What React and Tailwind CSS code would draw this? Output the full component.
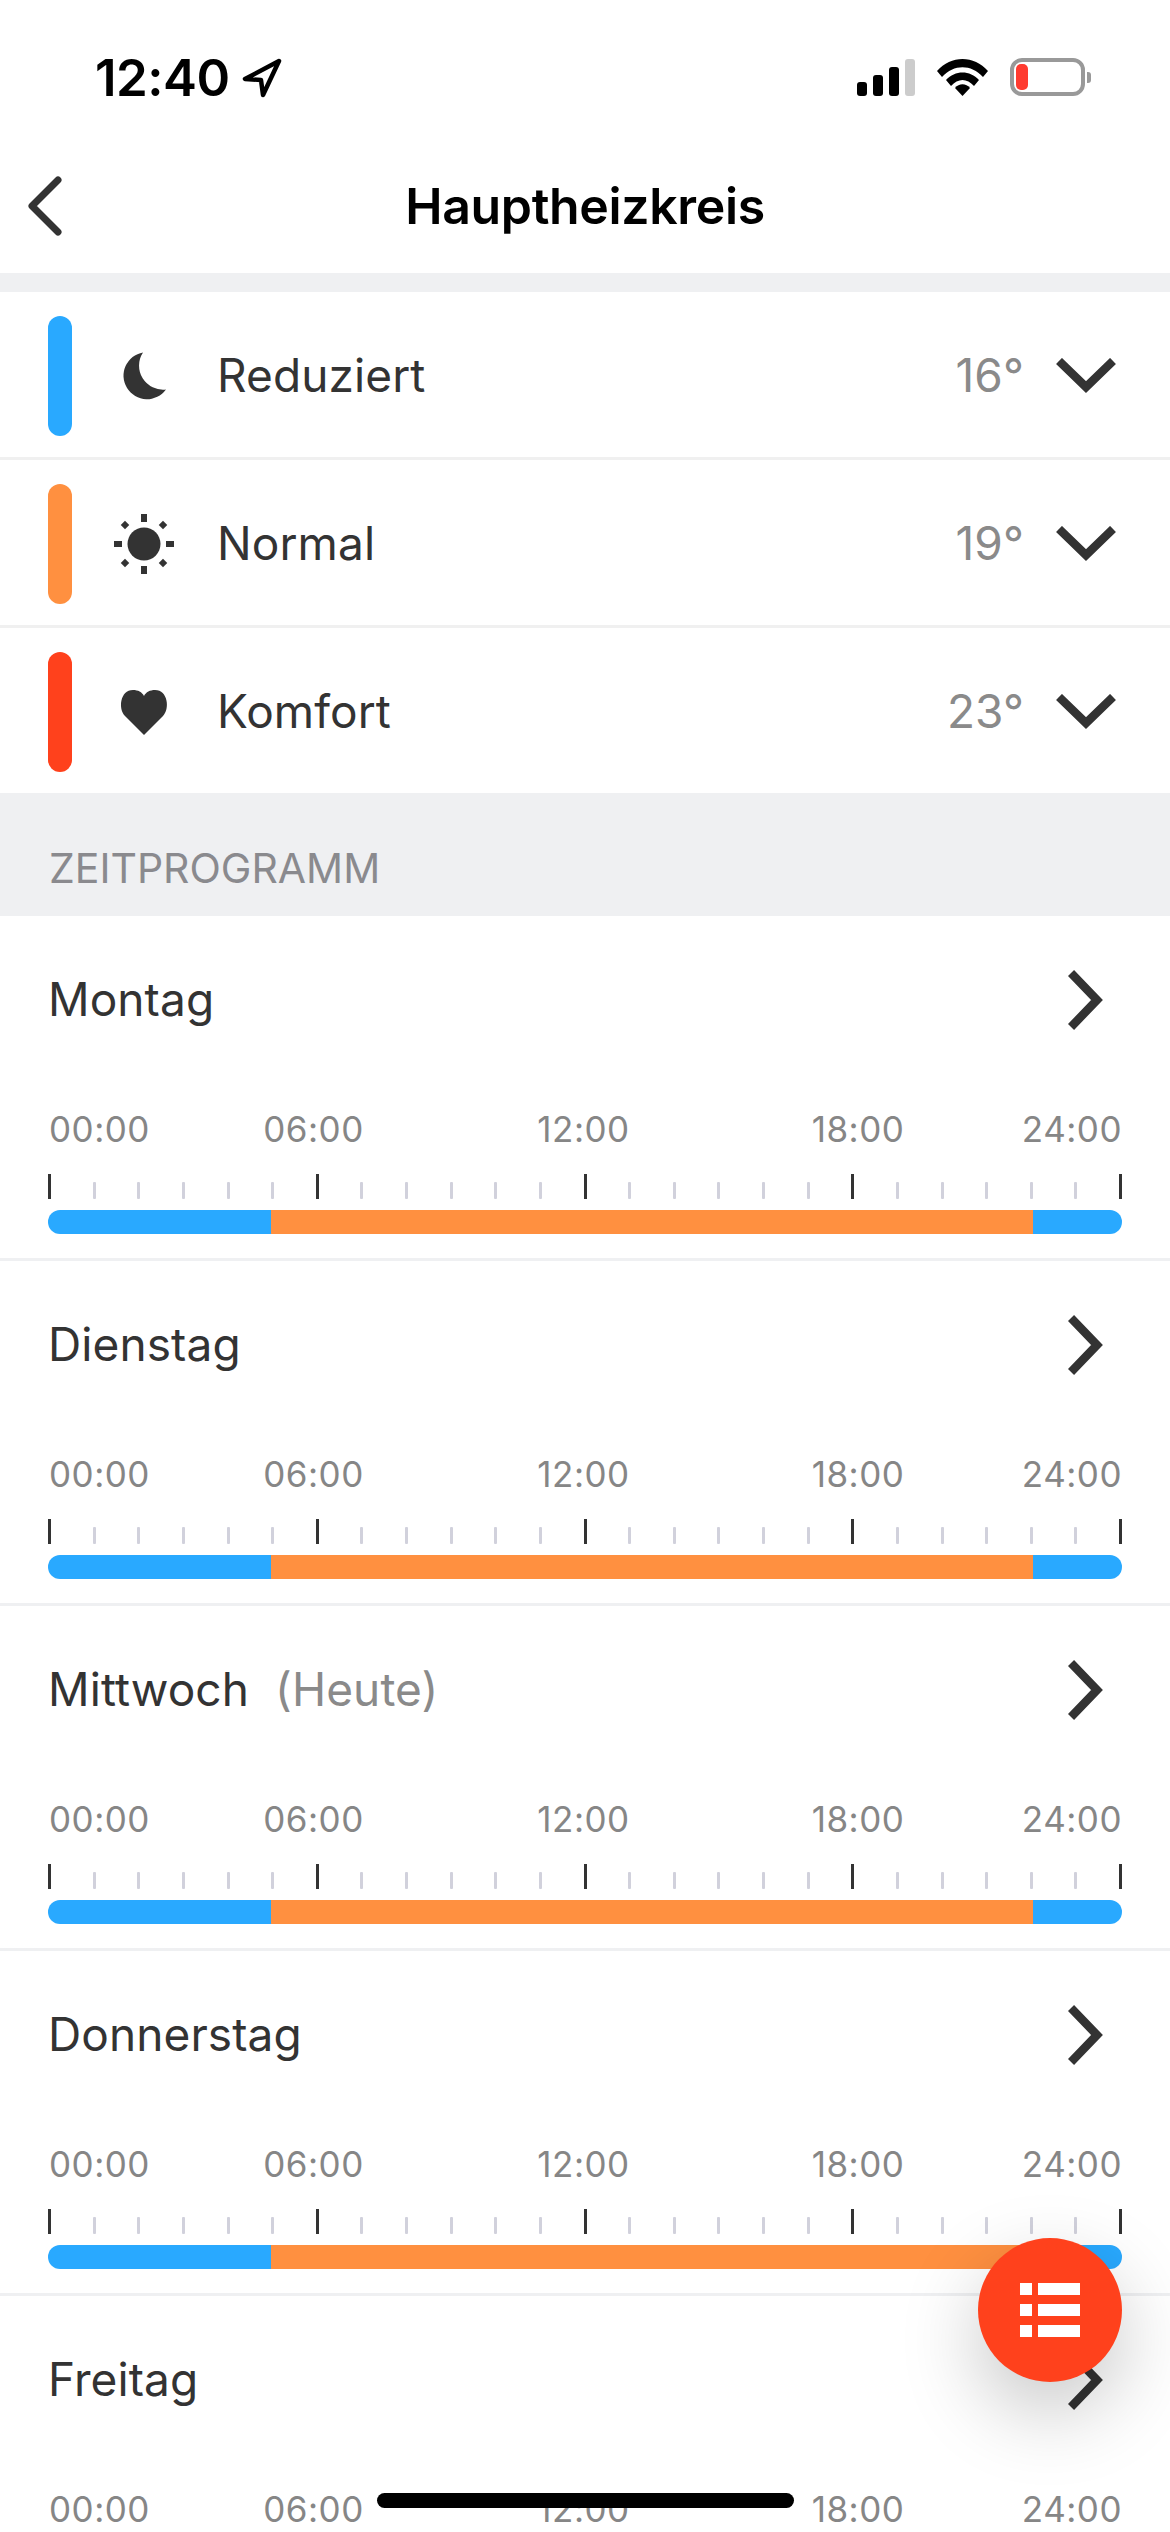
import React from 'react'

const days = [
  { name: 'Montag' },
  { name: 'Dienstag' },
  { name: 'Mittwoch', note: '(Heute)' },
  { name: 'Donnerstag' },
  { name: 'Freitag' },
]

const Moon = () => (
  <svg viewBox="0 0 60 60" className="w-[60px] h-[60px]" fill="#333">
    <path d="M29 6.5 A23.5 23.5 0 1 0 52 43.5 A24 24 0 0 1 29 6.5 Z" />
  </svg>
)

const Sun = () => (
  <svg viewBox="0 0 60 60" className="w-[60px] h-[60px]" fill="#333">
    <circle cx="30" cy="30" r="16.5" />
    <rect x="27" y="0" width="6" height="8" />
    <rect x="27" y="52" width="6" height="8" />
    <rect x="0" y="27" width="8" height="6" />
    <rect x="52" y="27" width="8" height="6" />
    <rect x="8" y="8" width="6" height="6" transform="rotate(45 11 11)" />
    <rect x="46" y="8" width="6" height="6" transform="rotate(45 49 11)" />
    <rect x="8" y="46" width="6" height="6" transform="rotate(45 11 49)" />
    <rect x="46" y="46" width="6" height="6" transform="rotate(45 49 49)" />
  </svg>
)

const Heart = () => (
  <svg viewBox="0 0 60 60" className="w-[60px] h-[60px]" fill="#333">
    <path d="M30 53 L11 34 C4 27 6 8 19 8 C24 8 28 10 30 14 C32 10 36 8 41 8 C54 8 56 27 49 34 Z" />
  </svg>
)

const ChevronDown = () => (
  <svg viewBox="0 0 60 36" className="w-[60px] h-[36px]" fill="none" stroke="#333" strokeWidth="8.5">
    <path d="M3 3 L30 29 L57 3" />
  </svg>
)

const ChevronRight = () => (
  <svg viewBox="0 0 36 60" className="w-[36px] h-[60px]" fill="none" stroke="#333" strokeWidth="8.5">
    <path d="M3 3 L29 30 L3 57" />
  </svg>
)

const modes = [
  { label: 'Reduziert', temp: '16°', color: 'bg-[#29a9ff]', Icon: Moon },
  { label: 'Normal', temp: '19°', color: 'bg-[#ff9040]', Icon: Sun },
  { label: 'Komfort', temp: '23°', color: 'bg-[#ff411c]', Icon: Heart },
]

const StatusBar = () => (
  <div className="h-[156px] flex items-start justify-between pt-[50px] pl-[95px] pr-[79px]">
    <div className="flex items-center gap-[12px]">
      <span className="text-[51px] leading-[56px] font-semibold tracking-[-0.5px] text-black">12:40</span>
      <svg viewBox="0 0 40 40" className="w-[40px] h-[40px]" fill="none" stroke="#000" strokeWidth="4.5" strokeLinejoin="round">
        <path d="M37 3 L3 21 L19 22 L21 37 Z" />
      </svg>
    </div>
    <div className="flex items-center gap-[22px] pt-[8px]">
      <div className="flex items-end gap-[6px] h-[37px]">
        <div className="w-[10px] h-[14px] rounded-[3px] bg-black" />
        <div className="w-[10px] h-[21px] rounded-[3px] bg-black" />
        <div className="w-[10px] h-[29px] rounded-[3px] bg-black" />
        <div className="w-[10px] h-[37px] rounded-[3px] bg-[#cccccc]" />
      </div>
      <svg viewBox="0 0 51 37" className="w-[51px] h-[37px]" fill="#000">
        <path d="M0 12 C14 -4 37 -4 51 12 L46 18 C34 5 17 5 5 18 Z" />
        <path d="M9 21 C18 11 33 11 42 21 L37 27 C30 19 21 19 14 27 Z" />
        <path d="M18 29 C22 24 29 24 33 29 L25.5 37 Z" />
      </svg>
      <div className="flex items-center gap-[2px]">
        <div className="w-[75px] h-[38px] rounded-[12px] border-[4px] border-[#999999] p-[2px]">
          <div className="w-[12px] h-full rounded-[5px] bg-[#ff3b30]" />
        </div>
        <div className="w-[4px] h-[11px] rounded-r-[3px] bg-[#999999]" />
      </div>
    </div>
  </div>
)

const Timeline = () => (
  <div>
    <div className="grid grid-cols-[131px_269px_271px_278px_1fr] text-[35px] leading-[42px] tracking-[0.5px] font-[370] text-[#868686]">
      <span className="pl-[1px]">00:00</span>
      <span className="text-center">06:00</span>
      <span className="text-center">12:00</span>
      <span className="text-center">18:00</span>
      <span className="text-right">24:00</span>
    </div>
    <div className="flex justify-between items-end h-[25px] mt-[24px]">
      {Array.from({ length: 25 }).map((_, i) => (
        <div key={i} className={i % 6 === 0 ? 'w-[3px] h-[25px] bg-[#333]' : 'w-[3px] h-[17px] rounded-[1px] bg-[#d1d1dc]'} />
      ))}
    </div>
    <div className="flex h-[24px] mt-[11px] rounded-[12px] overflow-hidden">
      <div className="w-[223px] bg-[#29a9ff]" />
      <div className="w-[762px] bg-[#ff9040]" />
      <div className="flex-1 bg-[#29a9ff]" />
    </div>
  </div>
)

const App = () => {
  return (
    <div className="relative w-[1170px] h-[2532px] overflow-hidden bg-white font-['Inter',sans-serif] text-[#333]">
      <StatusBar />
      <div className="h-[117px] relative flex items-center justify-center">
        <svg viewBox="0 0 36 60" className="absolute left-[27px] top-[20px] w-[36px] h-[60px]" fill="none" stroke="#333" strokeWidth="7" strokeLinecap="round" strokeLinejoin="round">
          <path d="M31 4 L5 30 L31 56" />
        </svg>
        <h1 className="text-[50px] leading-[60px] font-semibold tracking-[-0.35px] text-black -mt-[17px]">Hauptheizkreis</h1>
      </div>

      <div className="bg-[#eff0f2] pt-[19px] pb-0">
        <div className="bg-[#f0f0f0] flex flex-col gap-[3px]">
          {modes.map(({ label, temp, color, Icon }) => (
            <div key={label} className="h-[165px] bg-white flex items-center pl-[48px] pr-[54px]">
              <div className={`w-[24px] h-[120px] mt-[3px] rounded-[12px] ${color}`} />
              <div className="ml-[42px] mt-[3px]">
                <Icon />
              </div>
              <span className="ml-[43px] mt-[2px] text-[46px] tracking-[0.1px] font-[370]">{label}</span>
              <span className="ml-auto mt-[2px] text-[46px] tracking-[0.1px] font-[370] text-[#8a8a8a]">{temp}</span>
              <div className="ml-[32px] mt-[2px]">
                <ChevronDown />
              </div>
            </div>
          ))}
        </div>

        <div className="h-[123px] flex items-end pb-[25px] pl-[49px] text-[41px] leading-[46px] font-[370] text-[#8a8a8e]">ZEITPROGRAMM</div>

        <div className="bg-[#eff0f2] flex flex-col gap-[3px]">
          {days.map((day) => (
            <div key={day.name} className="h-[342px] shrink-0 bg-white px-[48px] pt-[40px]">
              <div className="flex items-center justify-between h-[88px] pr-[18px]">
                <div className="text-[46px] tracking-[0.1px] font-[370] -mt-[2px]">
                  {day.name}
                  {day.note && <span className="ml-[26px] text-[#8a8a8a]">{day.note}</span>}
                </div>
                <ChevronRight />
              </div>
              <div className="mt-[64px]">
                <Timeline />
              </div>
            </div>
          ))}
        </div>
      </div>

      <button type="button" className="absolute left-[978px] top-[2238px] w-[144px] h-[144px] rounded-full bg-[#ff411c] shadow-[0_30px_80px_rgba(0,0,0,0.22)] flex flex-col items-center justify-center gap-[8.5px]">
        {[0, 1, 2].map((i) => (
          <div key={i} className="flex gap-[6px]">
            <div className="w-[12px] h-[12.5px] bg-white" />
            <div className="w-[42px] h-[12.5px] bg-white" />
          </div>
        ))}
      </button>

      <div className="absolute left-[377px] top-[2493px] w-[417px] h-[15px] rounded-full bg-black" />
    </div>
  )
}

export default App
